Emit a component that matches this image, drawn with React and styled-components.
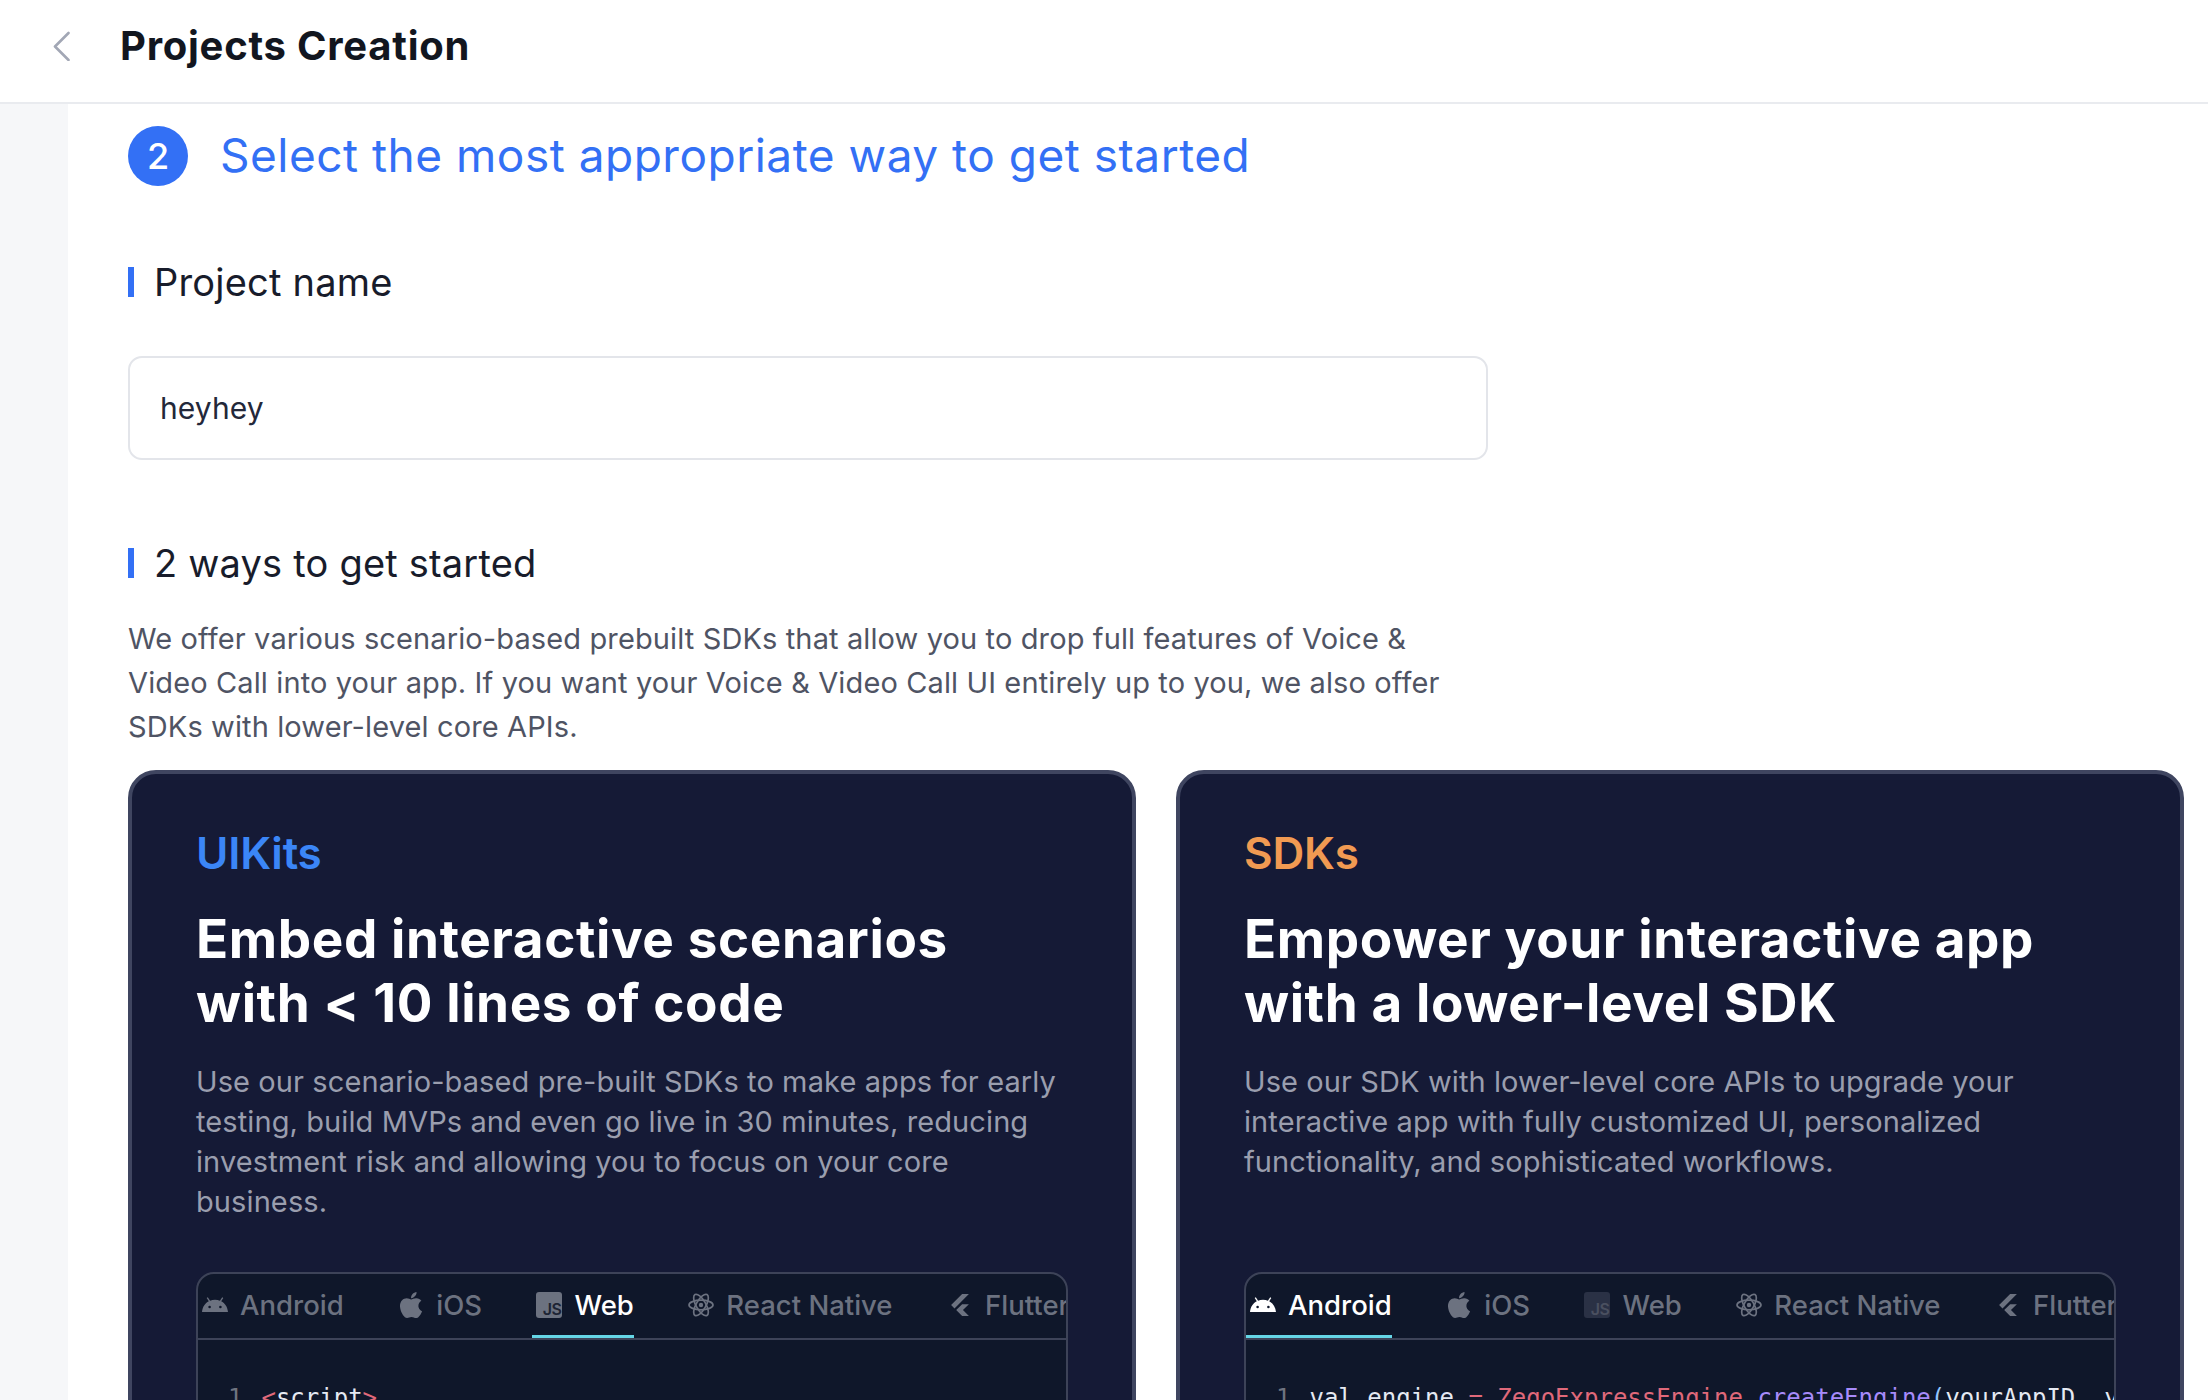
import React from 'react';
import styled, { createGlobalStyle } from 'styled-components';
import { FaApple } from 'react-icons/fa';
import { SiFlutter } from 'react-icons/si';

const Global = createGlobalStyle`
  html, body { margin: 0; padding: 0; background: #fff; }
  body { font-family: Inter, "Open Sans", sans-serif; overflow: hidden; }
  * { box-sizing: border-box; }
`;

const Page = styled.div`
  width: 2208px;
  height: 1400px;
  overflow: hidden;
  display: flex;
  flex-direction: column;
`;
const Header = styled.header`
  height: 104px;
  flex: none;
  display: flex;
  align-items: center;
  padding: 0 0 10px 53px;
  border-bottom: 2px solid #e9ebef;
  background: #fff;
`;
const Back = styled.svg`
  width: 18px;
  height: 30px;
  margin-right: 49px;
  flex: none;
`;
const PageTitle = styled.h1`
  margin: 0;
  font-size: 40px;
  line-height: 48px;
  font-weight: 700;
  color: #12161f;
  letter-spacing: 0.75px;
`;
const Body = styled.div`
  flex: 1;
  display: flex;
  min-height: 0;
`;
const Rail = styled.aside`
  width: 68px;
  flex: none;
  background: #f6f7f9;
`;
const Main = styled.main`
  flex: 1;
  padding: 22px 24px 0 60px;
  min-width: 0;
`;
const StepRow = styled.div`
  display: flex;
  align-items: center;
  gap: 32px;
  height: 60px;
`;
const StepBadge = styled.div`
  width: 60px;
  height: 60px;
  border-radius: 50%;
  background: #3370f5;
  color: #fff;
  font-size: 36px;
  font-weight: 500;
  display: flex;
  align-items: center;
  justify-content: center;
`;
const StepTitle = styled.h2`
  margin: -2px 0 0;
  font-size: 46px;
  font-weight: 400;
  color: #3370f5;
  letter-spacing: 0.5px;
`;
const SectionTitle = styled.h3`
  margin: ${p => p.$top}px 0 0;
  height: 30px;
  display: flex;
  align-items: center;
  font-size: 38px;
  line-height: 30px;
  font-weight: 400;
  color: #181c2b;
  padding-left: 20px;
  border-left: 6px solid #3370f5;
  letter-spacing: 0.2px;
`;
const NameInput = styled.div`
  margin-top: 59px;
  width: 1360px;
  height: 104px;
  border: 2px solid #e3e5ea;
  border-radius: 14px;
  padding-left: 30px;
  display: flex;
  align-items: center;
  font-size: 30px;
  color: #23283a;
  letter-spacing: 0.1px;
`;
const Lead = styled.p`
  margin: 39px 0 0;
  font-size: 29px;
  line-height: 44px;
  color: #4f5464;
  letter-spacing: 0.12px;
`;
const Cards = styled.div`
  margin-top: 21px;
  display: grid;
  grid-template-columns: 1008px 1008px;
  gap: 40px;
`;
const Card = styled.section`
  background: #151a36;
  border: 4px solid #3f4560;
  border-radius: 28px;
  padding: 52px 64px 40px;
  display: flex;
  flex-direction: column;
`;
const Kicker = styled.div`
  font-size: 44px;
  line-height: 54px;
  font-weight: 600;
  color: ${p => p.$color};
  letter-spacing: -0.2px;
`;
const Headline = styled.h2`
  margin: 27px 0 0;
  font-size: 53px;
  line-height: 64px;
  font-weight: 700;
  color: #fff;
  letter-spacing: 0.6px;
`;
const Desc = styled.p`
  margin: 27px 0 0;
  height: 160px;
  font-size: 29px;
  line-height: 40px;
  color: #9a9eae;
  letter-spacing: 0.1px;
`;
const CodeBox = styled.div`
  margin-top: 50px;
  height: 300px;
  background: #0f172a;
  border: 2px solid #3d4358;
  border-radius: 18px;
  overflow: hidden;
`;
const Tabs = styled.div`
  height: 66px;
  display: flex;
  gap: 50.5px;
  border-bottom: 2px solid #3d4358;
  overflow: hidden;
`;
const Tab = styled.div`
  flex: none;
  height: 64px;
  padding: 0 0 0 4px;
  display: flex;
  align-items: center;
  gap: 12px;
  font-size: 27.5px;
  font-weight: 500;
  color: ${p => (p.$active ? '#ffffff' : '#6c7280')};
  border-bottom: 3px solid ${p => (p.$active ? '#65d6e6' : 'transparent')};
`;
const TabIcon = styled.span`
  width: 26px;
  height: 26px;
  flex: none;
  display: flex;
  align-items: center;
  justify-content: center;
  color: ${p => (p.$active ? '#ffffff' : '#6c7280')};
`;
const CodeArea = styled.div`
  padding: 40px 0 0 30px;
  display: flex;
  gap: 19px;
  font-family: "DejaVu Sans Mono", monospace;
  font-size: 24px;
  line-height: 36px;
  white-space: pre;
  color: #e5e9f2;
`;
const LineNo = styled.span`
  color: #6f7480;
`;
const Tk = styled.span`
  color: ${p => p.$c};
`;
const JsBadge = styled.span`
  width: 26px;
  height: 26px;
  flex: none;
  border-radius: 3px;
  background: ${p => (p.$active ? '#6c7280' : '#2a3145')};
  color: ${p => (p.$active ? '#1d2434' : '#4a5060')};
  font-size: 16px;
  font-weight: 600;
  letter-spacing: -0.5px;
  line-height: 1;
  display: flex;
  align-items: flex-end;
  justify-content: flex-end;
  padding: 0 1px 1px 0;
`;

const AndroidIcon = () => (
  <svg width="26" height="15" viewBox="0 0 26 15">
    <path fill="currentColor" d="M0 15C.5 10 3 6.2 6.8 4.3L4.7 1 5.8.3l2.3 3.4C9.6 3.1 11.3 2.8 13 2.8s3.4.3 4.9.9L20.2.3l1.1.7-2.1 3.3C23 6.2 25.5 10 26 15H0Z" />
    <circle cx="7.6" cy="10" r="1.3" fill="#0f172a" />
    <circle cx="18.4" cy="10" r="1.3" fill="#0f172a" />
  </svg>
);
const ReactIcon = () => (
  <svg width="26" height="24" viewBox="0 0 26 24" fill="none" stroke="currentColor" strokeWidth="1.7">
    <ellipse cx="13" cy="12" rx="12" ry="4.8" />
    <ellipse cx="13" cy="12" rx="12" ry="4.8" transform="rotate(60 13 12)" />
    <ellipse cx="13" cy="12" rx="12" ry="4.8" transform="rotate(120 13 12)" />
    <circle cx="13" cy="12" r="2.2" fill="currentColor" stroke="none" />
  </svg>
);

const tabList = (active) => [
  { label: 'Android', icon: <AndroidIcon /> },
  { label: 'iOS', icon: <FaApple size={30} /> },
  { label: 'Web', icon: <JsBadge $active={active === 'Web'}>JS</JsBadge> },
  { label: 'React Native', icon: <ReactIcon /> },
  { label: 'Flutter', icon: <SiFlutter size={22} /> },
];

const TabBar = ({ active }) => (
  <Tabs>
    {tabList(active).map(t => (
      <Tab key={t.label} $active={t.label === active}>
        <TabIcon $active={t.label === active}>{t.icon}</TabIcon>
        {t.label}
      </Tab>
    ))}
  </Tabs>
);

export default function App() {
  return (
    <Page>
      <Global />
      <Header>
        <Back viewBox="0 0 18 30" fill="none">
          <path d="M15.5 2 2 15.5 15.5 29" stroke="#a2a7b5" strokeWidth="2.6" strokeLinecap="round" strokeLinejoin="round" />
        </Back>
        <PageTitle>Projects Creation</PageTitle>
      </Header>
      <Body>
        <Rail />
        <Main>
          <StepRow>
            <StepBadge>2</StepBadge>
            <StepTitle>Select the most appropriate way to get started</StepTitle>
          </StepRow>
          <SectionTitle $top={81}>Project name</SectionTitle>
          <NameInput>heyhey</NameInput>
          <SectionTitle $top={88}>2 ways to get started</SectionTitle>
          <Lead>
            We offer various scenario-based prebuilt SDKs that allow you to drop full features of Voice &amp;<br />
            Video Call into your app. If you want your Voice &amp; Video Call UI entirely up to you, we also offer<br />
            SDKs with lower-level core APIs.
          </Lead>
          <Cards>
            <Card>
              <Kicker $color="#3b86f7">UIKits</Kicker>
              <Headline>Embed interactive scenarios<br />with &lt; 10 lines of code</Headline>
              <Desc>
                Use our scenario-based pre-built SDKs to make apps for early<br />
                testing, build MVPs and even go live in 30 minutes, reducing<br />
                investment risk and allowing you to focus on your core<br />
                business.
              </Desc>
              <CodeBox>
                <TabBar active="Web" />
                <CodeArea>
                  <LineNo>1</LineNo>
                  <span><Tk $c="#e0697a">&lt;</Tk>script<Tk $c="#e0697a">&gt;</Tk></span>
                </CodeArea>
              </CodeBox>
            </Card>
            <Card>
              <Kicker $color="#f19a52">SDKs</Kicker>
              <Headline>Empower your interactive app<br />with a lower-level SDK</Headline>
              <Desc>
                Use our SDK with lower-level core APIs to upgrade your<br />
                interactive app with fully customized UI, personalized<br />
                functionality, and sophisticated workflows.
              </Desc>
              <CodeBox>
                <TabBar active="Android" />
                <CodeArea>
                  <LineNo>1</LineNo>
                  <span>val engine <Tk $c="#e0697a">= ZegoExpressEngine</Tk>.<Tk $c="#a78bfa">createEngine</Tk><Tk $c="#93c5fd">(</Tk>yourAppID, y</span>
                </CodeArea>
              </CodeBox>
            </Card>
          </Cards>
        </Main>
      </Body>
    </Page>
  );
}
